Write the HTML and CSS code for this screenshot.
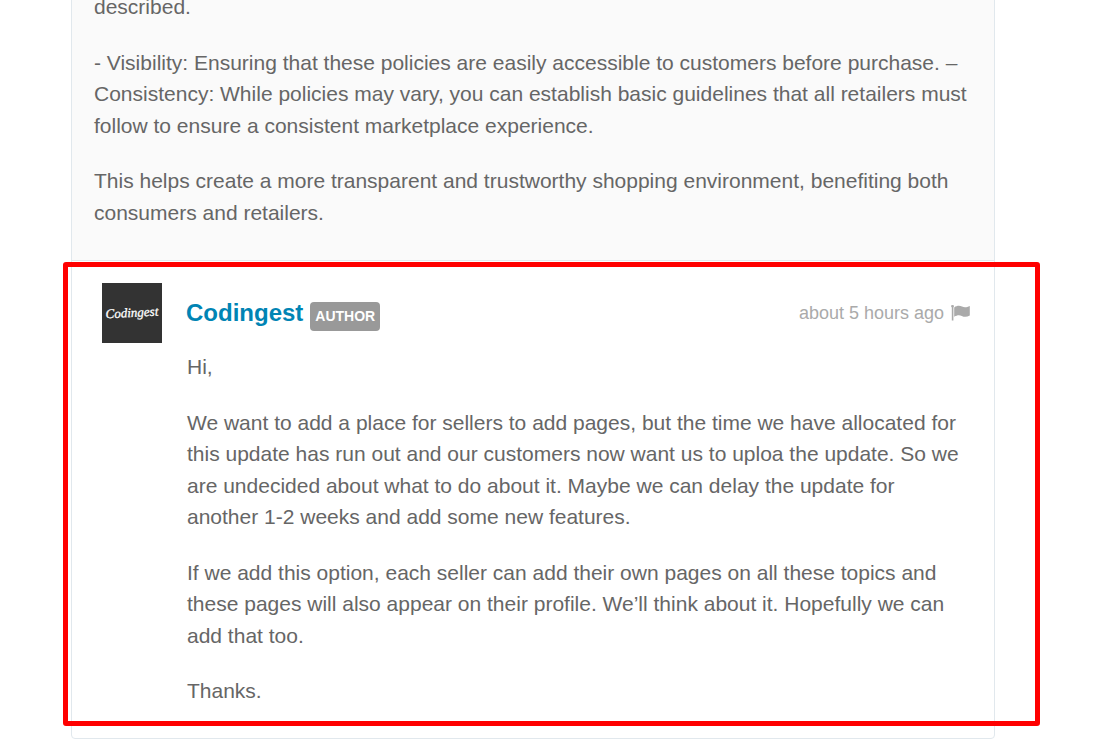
FILE: index.html
```html
<!DOCTYPE html>
<html lang="en">
<head>
    <meta charset="UTF-8">
    <meta name="viewport" content="width=device-width, initial-scale=1.0">
    <title>Comments</title>
    <link rel="stylesheet" href="styles.css">
</head>
<body>
    <main class="thread">
        <article class="comment">
            <p>described.</p>
            <p>- Visibility: Ensuring that these policies are easily accessible to customers before purchase. – Consistency: While policies may vary, you can establish basic guidelines that all retailers must follow to ensure a consistent marketplace experience.</p>
            <p>This helps create a more transparent and trustworthy shopping environment, benefiting both consumers and retailers.</p>
        </article>

        <article class="reply">
            <!-- Avatar -->
            <svg class="avatar" viewBox="0 0 60 60" role="img" aria-label="Codingest logo">
                <rect width="60" height="60" fill="#333"/>
                <text class="logo-text" x="30" y="34" text-anchor="middle" transform="rotate(-3 30 30)">Codingest</text>
            </svg>
            <div class="reply-main">
                <header class="reply-header">
                    <a href="#" class="username">Codingest</a>
                    <span class="badge">AUTHOR</span>
                    <span class="time">about 5 hours ago</span>
                    <button type="button" class="flag" aria-label="Flag comment">
                        <svg viewBox="0 0 19 16" width="19" height="16">
                            <path d="M0 1.2 A1.5 1.2 0 0 1 3 1.2 L2.4 2.4 V15.5 H0.8 V2.4 Z" fill="#aaa"/>
                            <path d="M3.2 2.4 C6 0.6 8.5 0.4 11 1.6 C13.6 2.9 15.8 2.4 18.8 1 V10.6 C15.8 12.2 13.2 12.2 10.8 11 C8.4 9.8 6 10.1 3.2 11.8 Z" fill="#aaa"/>
                        </svg>
                    </button>
                </header>
                <div class="reply-body">
                    <p>Hi,</p>
                    <p>We want to add a place for sellers to add pages, but the time we have allocated for this update has run out and our customers now want us to uploa the update. So we are undecided about what to do about it. Maybe we can delay the update for another 1-2 weeks and add some new features.</p>
                    <p>If we add this option, each seller can add their own pages on all these topics and these pages will also appear on their profile. We’ll think about it. Hopefully we can add that too.</p>
                    <p>Thanks.</p>
                </div>
            </div>
            <!-- Red highlight around the reply -->
            <div class="highlight"></div>
        </article>
    </main>
</body>
</html>
```

FILE: styles.css
```css
body {
    margin: 0;
    background-color: #fff;
    color: #666;
    font-family: "Liberation Sans", Arial, sans-serif;
    font-size: 21px;
    line-height: 1.5;
    overflow: hidden;
}

p {
    margin: 0 0 24px;
}

.thread {
    margin: -10px 106px 0 71px;
    border: 1px solid #e1e8ed;
    border-radius: 4px;
}

.comment {
    padding: 0 22px 8px;
    background-color: #fafafa;
    border-bottom: 1px solid #e1e8ed;
}

.reply {
    position: relative;
    display: flex;
    gap: 24px;
    padding: 22px 24px 7px 30px;
}

.avatar {
    flex: none;
    width: 60px;
    height: 60px;
}

.logo-text {
    fill: #fff;
    stroke: #fff;
    stroke-width: 0.3px;
    font-family: "Liberation Serif", serif;
    font-size: 13px;
    font-style: italic;
}

.reply-main {
    flex: 1;
}

.reply-header {
    display: flex;
    align-items: center;
    height: 60px;
    margin-bottom: 8px;
}

.username {
    color: #0084b4;
    font-size: 24px;
    font-weight: bold;
    text-decoration: none;
}

.badge {
    margin: 7px 0 0 7px;
    padding: 4px 5px;
    border-radius: 4px;
    background-color: #999;
    color: #fff;
    font-size: 14px;
    font-weight: bold;
}

.time {
    margin-left: auto;
    color: #aaa;
    font-size: 18px;
}

.flag {
    display: flex;
    margin-left: 7px;
    padding: 0;
    border: 0;
    background: none;
    cursor: pointer;
}

.reply-body {
    padding-left: 1px;
}

.highlight {
    position: absolute;
    top: 1px;
    right: -46px;
    bottom: 12px;
    left: -9px;
    border: 5px solid #f00;
    border-radius: 3px;
    pointer-events: none;
}
```
